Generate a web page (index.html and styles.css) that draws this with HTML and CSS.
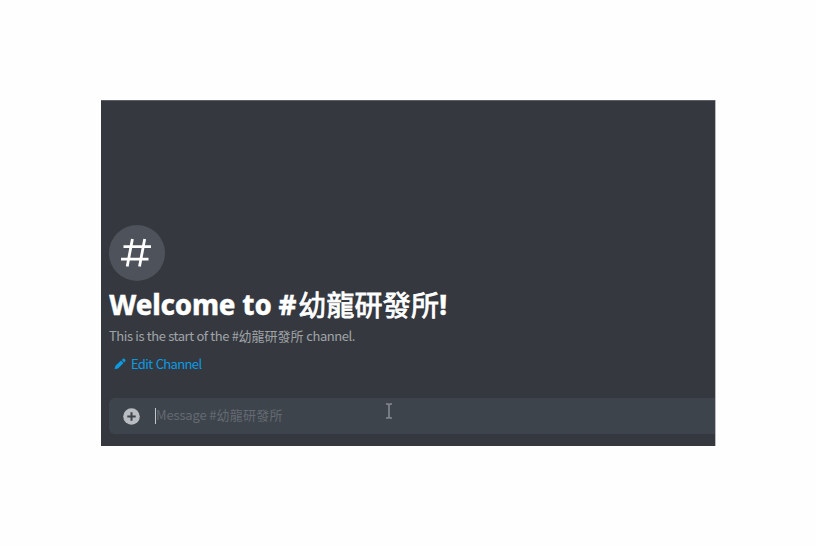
FILE: index.html
```html
<!DOCTYPE html>
<html lang="zh-Hant">
<head>
<meta charset="utf-8">
<title>#幼龍研發所</title>
<link rel="stylesheet" href="styles.css">
</head>
<body>
<main class="panel">
  <div class="badge">
    <svg width="32" height="30" viewBox="0 0 32 30" fill="none" stroke="#fff" stroke-width="2.8"><path d="M3.5 8.6H31M1 21.1H28.5M12.4 1L7.2 28.5M24.7 1L19.5 28.5"/></svg>
  </div>
  <h1 class="title"><span class="latin">Welcome to #</span><span class="name">幼龍研發所</span><span class="latin">!</span></h1>
  <p class="intro">This is the start of the #<span class="intro-name">幼龍研發所</span> channel.</p>
  <a class="edit">
    <svg width="12" height="12" viewBox="0 0 12 12" fill="#0b9be3"><path d="M0.5 11.3L1.5 7.7L7 2.6L9.5 5.1L4 10.4ZM7.8 1.9L9 .8Q9.7.2 10.4.8L11.3 1.7Q11.9 2.4 11.2 3.2L10.2 4.4Z"/></svg>
    <span>Edit Channel</span>
  </a>
  <div class="composer">
    <svg class="plus" width="17" height="17" viewBox="0 0 17 17"><circle cx="8.5" cy="8.5" r="8.3" fill="#b9bdc1"/><path d="M8.5 4.3v8.4M4.3 8.5h8.4" stroke="#3d434b" stroke-width="2"/></svg>
    <span class="caret"></span>
    <span class="placeholder">Message #<span class="place-name">幼龍研發所</span></span>
    <svg class="pointer" width="8" height="16" viewBox="0 0 8 16" fill="none" stroke="#858a90" stroke-width="1.6"><path d="M1 1H3L4 2L5 1H7M4 2V14M1 15H3L4 14L5 15H7"/></svg>
  </div>
</main>
</body>
</html>
```
FILE: styles.css
```css
body {
  margin: 0;
  padding: 100px 101px;
  height: 346px;
  background: #fefefe;
  font-family: "Noto Sans CJK TC", sans-serif;
}
.panel {
  box-sizing: border-box;
  width: 614px;
  height: 346px;
  padding: 125px 0 0 8px;
  background: #35393f;
  box-shadow: inset 0 1px 0 #5b5f64, 1px 0 0 #b9bbbd;
  overflow: hidden;
}
.badge {
  display: flex;
  align-items: center;
  justify-content: center;
  width: 56px;
  height: 56px;
  padding-right: 2px;
  box-sizing: border-box;
  border-radius: 50%;
  background: #4e525a;
}
.title {
  display: flex;
  margin: 4px 0 0;
  height: 40px;
  line-height: 40px;
  font-size: 28px;
  color: #fff;
  white-space: pre;
}
.latin {
  font-family: "Noto Sans", sans-serif;
  font-weight: 800;
  font-size: 27.5px;
  letter-spacing: -0.2px;
  -webkit-text-stroke: 0.3px #fff;
}
.name {
  margin: -1px 0 0 2px;
  font-weight: 400;
  letter-spacing: 0.2px;
  -webkit-text-stroke: 0.8px #fff;
}
.intro {
  margin: 0;
  height: 21px;
  line-height: 21px;
  font-size: 13px;
  letter-spacing: -0.45px;
  word-spacing: 0.3px;
  color: #a0a4a8;
  white-space: pre;
}
.intro-name {
  letter-spacing: 0;
}
.edit {
  display: flex;
  align-items: center;
  gap: 5px;
  margin: 8px 0 0 5px;
  height: 20px;
  line-height: 20px;
  font-size: 13px;
  letter-spacing: -0.65px;
  word-spacing: 1px;
  color: #0b9be3;
}
.composer {
  display: flex;
  align-items: center;
  margin-top: 24px;
  height: 36px;
  padding-left: 14px;
  border-radius: 6px 0 0 6px;
  background: #3e444c;
}
.caret {
  width: 1px;
  height: 16px;
  margin-left: 15px;
  background: #c4c7ca;
}
.placeholder {
  width: 229px;
  margin-top: -2px;
  font-size: 13px;
  line-height: 20px;
  letter-spacing: -0.15px;
  color: #646a71;
  white-space: pre;
}
.place-name {
  letter-spacing: 0.3px;
}
.pointer {
  margin-bottom: 10px;
}
```
